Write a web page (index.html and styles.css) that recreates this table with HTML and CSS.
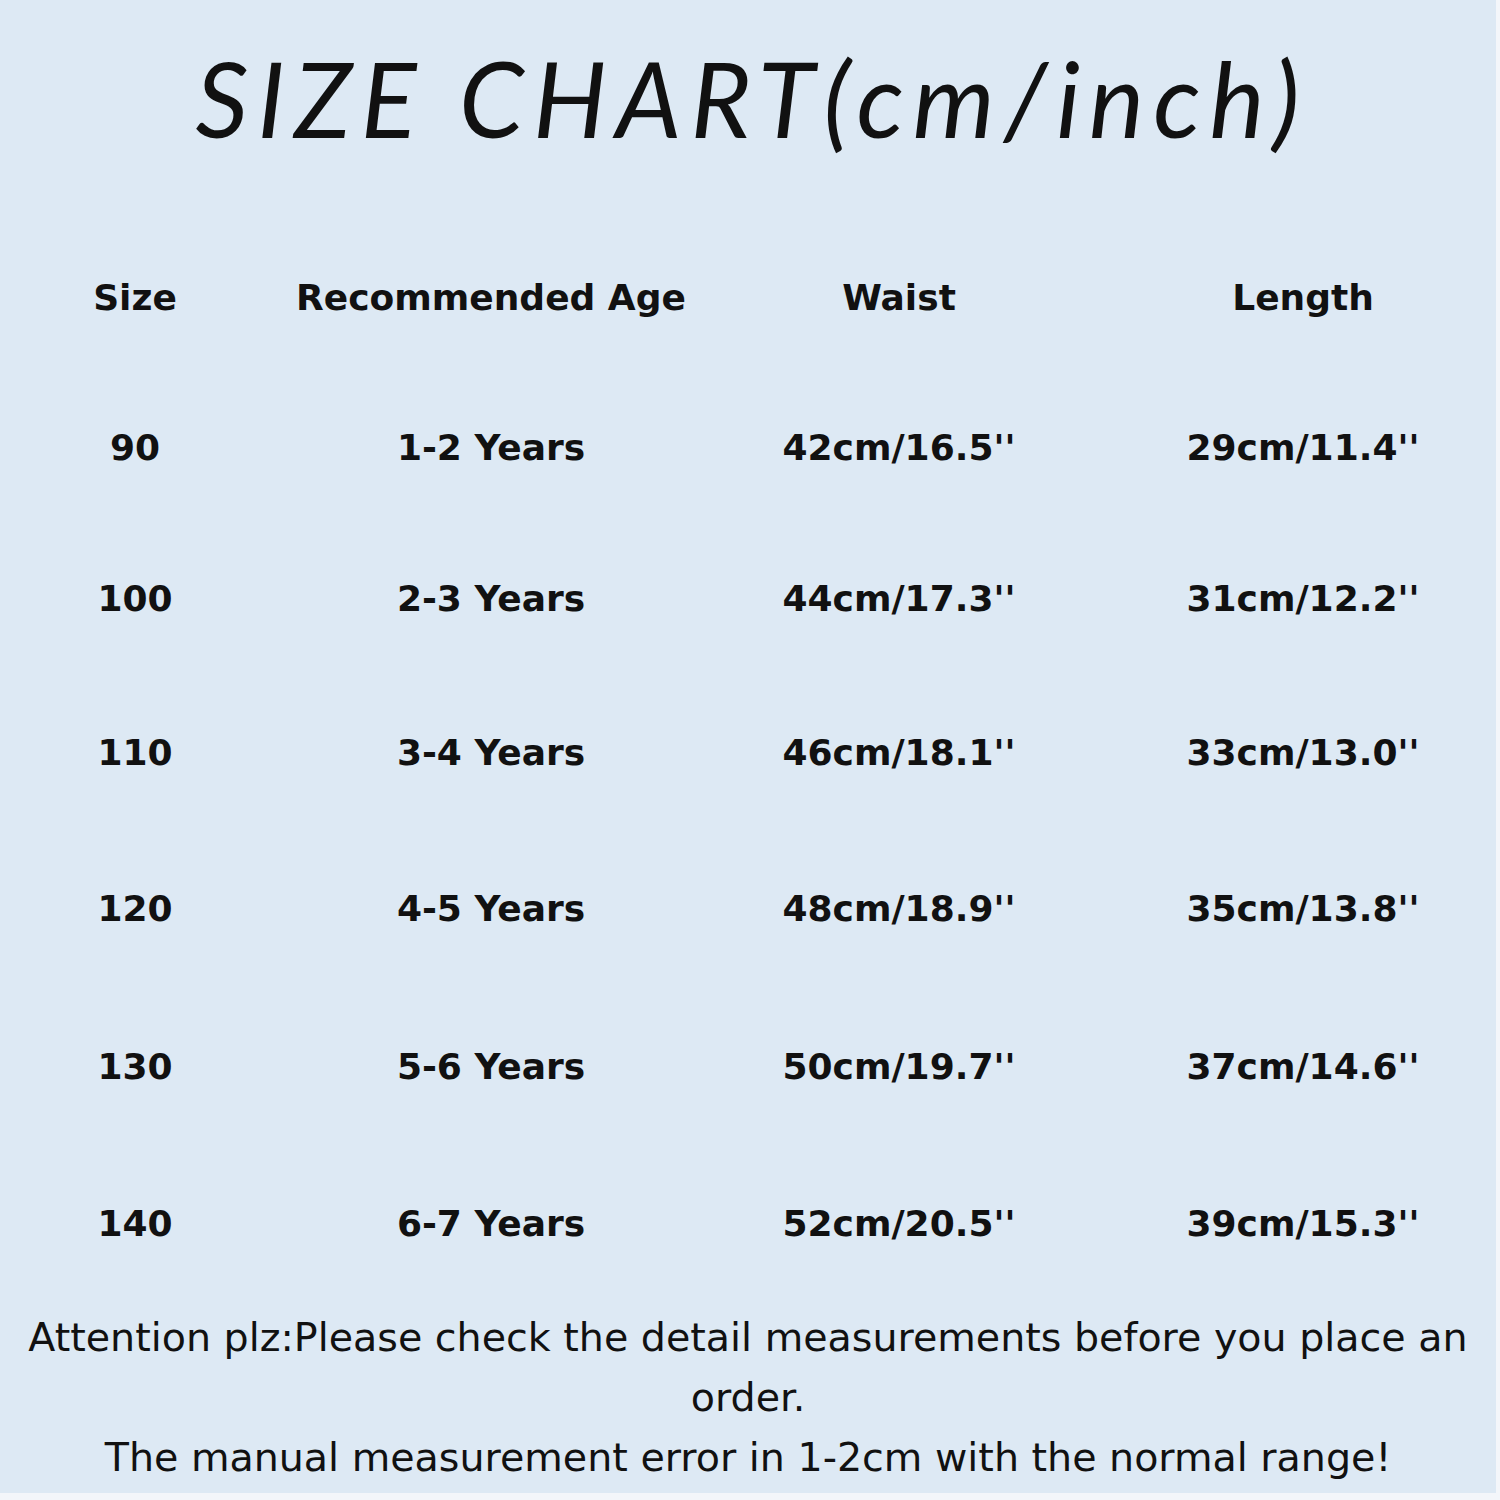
FILE: index.html
```html
<!DOCTYPE html>
<html lang="en">
<head>
<meta charset="utf-8">
<title>Size Chart</title>
<link rel="stylesheet" href="styles.css">
</head>
<body>
<main class="panel">
  <h1 class="title">SIZE CHART(cm/inch)</h1>
  <div class="chart">
    <div class="cell head">Size</div>
    <div class="cell head">Recommended Age</div>
    <div class="cell head">Waist</div>
    <div class="cell head">Length</div>

    <div class="cell">90</div>
    <div class="cell">1-2 Years</div>
    <div class="cell">42cm/16.5''</div>
    <div class="cell">29cm/11.4''</div>

    <div class="cell">100</div>
    <div class="cell">2-3 Years</div>
    <div class="cell">44cm/17.3''</div>
    <div class="cell">31cm/12.2''</div>

    <div class="cell">110</div>
    <div class="cell">3-4 Years</div>
    <div class="cell">46cm/18.1''</div>
    <div class="cell">33cm/13.0''</div>

    <div class="cell">120</div>
    <div class="cell">4-5 Years</div>
    <div class="cell">48cm/18.9''</div>
    <div class="cell">35cm/13.8''</div>

    <div class="cell">130</div>
    <div class="cell">5-6 Years</div>
    <div class="cell">50cm/19.7''</div>
    <div class="cell">37cm/14.6''</div>

    <div class="cell">140</div>
    <div class="cell">6-7 Years</div>
    <div class="cell">52cm/20.5''</div>
    <div class="cell">39cm/15.3''</div>
  </div>
  <p class="note">Attention plz:Please check the detail measurements before you place an order.<br>The manual measurement error in 1-2cm with the normal range!</p>
</main>
</body>
</html>
```
FILE: styles.css
```css
html, body {
  margin: 0;
  padding: 0;
  background: #f3f6fa;
}
body {
  width: 1500px;
  height: 1500px;
  overflow: hidden;
}
.panel {
  width: 1496px;
  height: 1493px;
  background: #dde9f4;
  overflow: hidden;
  color: #111;
}
.title {
  margin: 0;
  height: 222px;
  box-sizing: border-box;
  padding-top: 28px;
  padding-left: 8px;
  text-align: center;
  font-family: "Lato", "DejaVu Sans", sans-serif;
  font-style: italic;
  font-weight: 400;
  font-size: 104px;
  line-height: 140px;
  letter-spacing: 9px;
}
.chart {
  display: grid;
  width: 1520px;
  grid-template-columns: 270px 442px 374px 434px;
  grid-template-rows: 150px 150px 152px 156px 157px 158px 156px;
}
.cell {
  display: flex;
  align-items: center;
  justify-content: center;
  font-family: "DejaVu Sans", sans-serif;
  font-weight: 700;
  font-size: 36px;
  white-space: nowrap;
}
.note {
  margin: 0;
  padding: 6px 8px 0;
  text-align: center;
  font-family: "DejaVu Sans", sans-serif;
  font-size: 39.6px;
  line-height: 60px;
}
```
